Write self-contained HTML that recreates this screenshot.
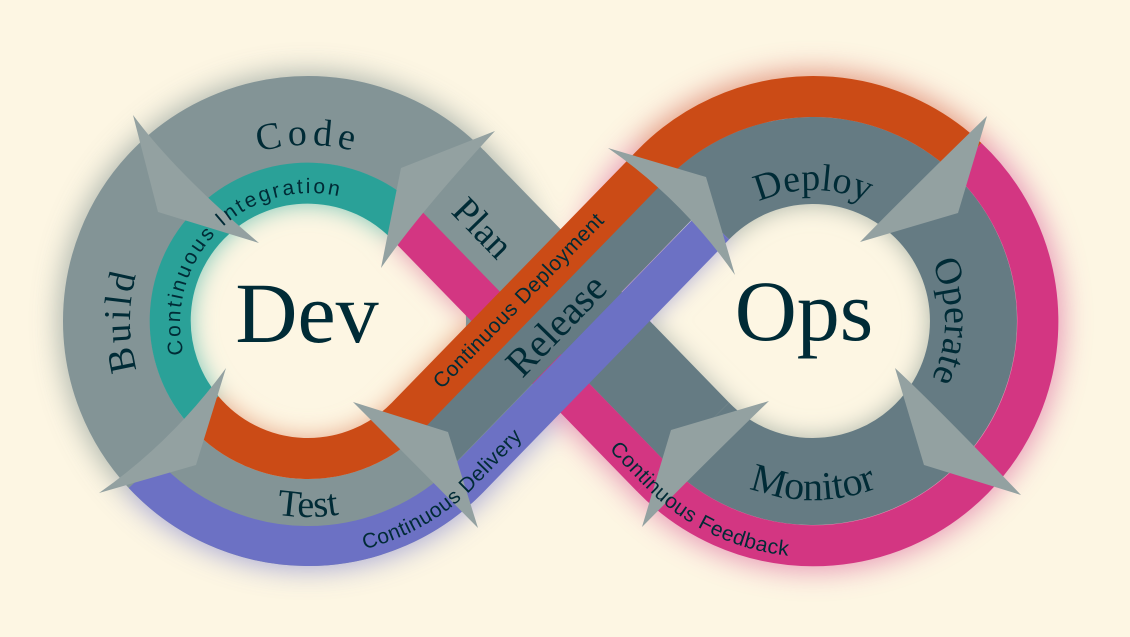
<!DOCTYPE html>
<html><head><meta charset="utf-8"><style>
html,body{margin:0;padding:0;background:#fdf6e3;}
svg{display:block}
.s{font-family:"Liberation Serif",serif;fill:#002b36}
.n{font-family:"Liberation Sans",sans-serif;fill:#002b36}
</style></head><body>
<svg width="1130" height="637" viewBox="0 0 1130 637" xmlns="http://www.w3.org/2000/svg">
<defs>
<filter id="bl" x="-20%" y="-20%" width="140%" height="140%"><feGaussianBlur stdDeviation="14"/></filter>
<filter id="bl2" x="-30%" y="-30%" width="160%" height="160%"><feGaussianBlur stdDeviation="12"/></filter>
<clipPath id="c1"><circle cx="308" cy="321" r="160"/></clipPath>
<clipPath id="c2"><circle cx="813" cy="321" r="160"/></clipPath>
<path id="pCode" d="M132,321 A176,176 0 0 1 484,321"/>
<path id="pBuild" d="M308,499 A178,178 0 0 1 308,143"/>
<path id="pCI" d="M216.1,412.9 A130,130 0 0 1 399.9,229.1"/>
<path id="pTest" d="M112,321 A196,196 0 0 0 504,321"/>
<path id="pDeploy" d="M682,321 A131,131 0 0 1 944,321"/>
<path id="pOperate" d="M813,189 A132,132 0 0 1 813,453"/>
<path id="pMonitor" d="M634,321 A179,179 0 0 0 992,321"/>
<path id="pCF" d="M602,442.5 L643.8,485.5 A236,236 0 0 0 893.7,542.8"/>
<path id="pCDel" d="M348.8,552.4 A235,235 0 0 0 476.5,484.8 L581,377.3"/>
<path id="pCDep" d="M410.9,421.1 L656.4,168.7"/>
<path id="pRel" d="M447.1,456.3 L692.5,203.9"/>
<path id="pPlan" d="M435.3,197.2 L680.7,449.6"/>
</defs>
<rect width="1130" height="637" fill="#fdf6e3"/>
<!-- glows -->
<g filter="url(#bl)" opacity="0.75">
<circle cx="308" cy="321" r="201" fill="none" stroke="#8f9d9a" stroke-width="95"/>
<circle cx="813" cy="321" r="210" fill="none" stroke="#e07aa8" stroke-width="80"/>
<path d="M652.1,164.5 A224.5,224.5 0 0 1 967.3,157.9" fill="none" stroke="#d97a50" stroke-width="45"/>
<path d="M143.4,474.4 A225,225 0 0 0 469.3,477.9 L714.8,225.5" fill="none" stroke="#8c8fd6" stroke-width="44"/>
<path d="M406.6,225.1 L652.1,477.5" fill="none" stroke="#e07aa8" stroke-width="50"/>
</g>
<!-- inner hole glows -->
<g clip-path="url(#c1)">
<circle cx="308" cy="321" r="160" fill="#fdf6e3"/>
<g filter="url(#bl2)">
<path d="M406.6,225.1 A137.5,137.5 0 0 0 202.7,409.4" fill="none" stroke="#7cc6b8" stroke-width="41"/>
<path d="M202.7,409.4 A137.5,137.5 0 0 0 406.6,416.9 L500,320" fill="none" stroke="#e6a686" stroke-width="41"/>
<path d="M406.6,225.1 L480,300" fill="none" stroke="#e6a0b4" stroke-width="45"/>
</g>
</g>
<g clip-path="url(#c2)">
<circle cx="813" cy="321" r="160" fill="#fdf6e3"/>
<g filter="url(#bl2)">
<path d="M697.9,209.1 A160.5,160.5 0 1 1 697.9,432.9" fill="none" stroke="#aab4a8" stroke-width="87"/>
<path d="M560,380 L714.8,225.5" fill="none" stroke="#a9a8d6" stroke-width="40"/>
<path d="M575.2,306.7 L697.9,432.9" fill="none" stroke="#b8bdb4" stroke-width="87"/>
</g>
</g>
<!-- rings -->
<circle cx="308" cy="321" r="201.5" fill="none" stroke="#839496" stroke-width="87"/>
<path d="M697.9,209.1 A160.5,160.5 0 1 1 697.9,432.9" fill="none" stroke="#657b83" stroke-width="87"/>
<path d="M406.6,225.1 A137.5,137.5 0 0 0 202.7,409.4" fill="none" stroke="#2aa198" stroke-width="41"/>
<path d="M967.3,157.9 A224.5,224.5 0 1 1 652.1,477.5" fill="none" stroke="#d33682" stroke-width="41"/>
<!-- band B -->
<path d="M452.5,180.5 L575.2,306.7" fill="none" stroke="#839496" stroke-width="87"/>
<path d="M575.2,306.7 L697.9,432.9" fill="none" stroke="#657b83" stroke-width="87"/>
<path d="M406.6,225.1 L652.1,477.5" fill="none" stroke="#d33682" stroke-width="41"/>
<!-- band A -->
<path d="M437.8,447.2 L683.2,194.8" fill="none" stroke="#657b83" stroke-width="47"/>
<path d="M143.4,474.4 A225,225 0 0 0 469.3,477.9 L714.8,225.5" fill="none" stroke="#6c71c4" stroke-width="40"/>
<path d="M202.7,409.4 A137.5,137.5 0 0 0 406.6,416.9 L652.1,164.5 A224.5,224.5 0 0 1 967.3,157.9" fill="none" stroke="#cb4b16" stroke-width="41"/>
<!-- arrows -->
<g fill="#93a1a1">
<path d="M133,115 L158,212 L259,243 Q175,172 133,115Z"/>
<path d="M495,131 L401,168 L381,268 Q420,212 495,131Z"/>
<path d="M226,368 L196,465 L99,493 Q172,442 226,368Z"/>
<path d="M353,402 L448,432 L478,528 Q412,461 353,402Z"/>
<path d="M608,148 L706,177 L735,275 Q682,199 608,148Z"/>
<path d="M987,116 L958,213 L860,242 Q915,186 987,116Z"/>
<path d="M895,368 L924,465 L1021,495 Q940,410 895,368Z"/>
<path d="M769,401 L671,430 L642,527 Q710,458 769,401Z"/>
</g>
<!-- text -->
<text class="s" x="307" y="342" font-size="86" text-anchor="middle">Dev</text>
<text class="s" x="804" y="340" font-size="86" text-anchor="middle">Ops</text>
<text class="s" font-size="38" letter-spacing="5" text-anchor="middle"><textPath href="#pCode" startOffset="50%">Code</textPath></text>
<text class="s" font-size="38" letter-spacing="3" text-anchor="middle"><textPath href="#pBuild" startOffset="50%">Build</textPath></text>
<text class="s" font-size="38" text-anchor="middle"><textPath href="#pTest" startOffset="50%">Test</textPath></text>
<text class="s" font-size="38" text-anchor="middle"><textPath href="#pDeploy" startOffset="50%">Deploy</textPath></text>
<text class="s" font-size="38" text-anchor="middle"><textPath href="#pOperate" startOffset="50%">Operate</textPath></text>
<text class="s" font-size="40" text-anchor="middle"><textPath href="#pMonitor" startOffset="50%">Monitor</textPath></text>
<text class="s" font-size="40" text-anchor="middle"><textPath href="#pRel" startOffset="170">Release</textPath></text>
<text class="s" font-size="38" text-anchor="middle"><textPath href="#pPlan" startOffset="55">Plan</textPath></text>
<text class="n" font-size="21" letter-spacing="2.5" text-anchor="middle"><textPath href="#pCI" startOffset="50%">Continuous  Integration</textPath></text>
<text class="n" font-size="21" letter-spacing="0.5"><textPath href="#pCDep" startOffset="44">Continuous Deployment</textPath></text>
<text class="n" font-size="21" letter-spacing="0.5"><textPath href="#pCDel" startOffset="16">Continuous  Delivery</textPath></text>
<text class="n" font-size="21" letter-spacing="0.5"><textPath href="#pCF" startOffset="10">Continuous Feedback</textPath></text>
</svg>
</body></html>
